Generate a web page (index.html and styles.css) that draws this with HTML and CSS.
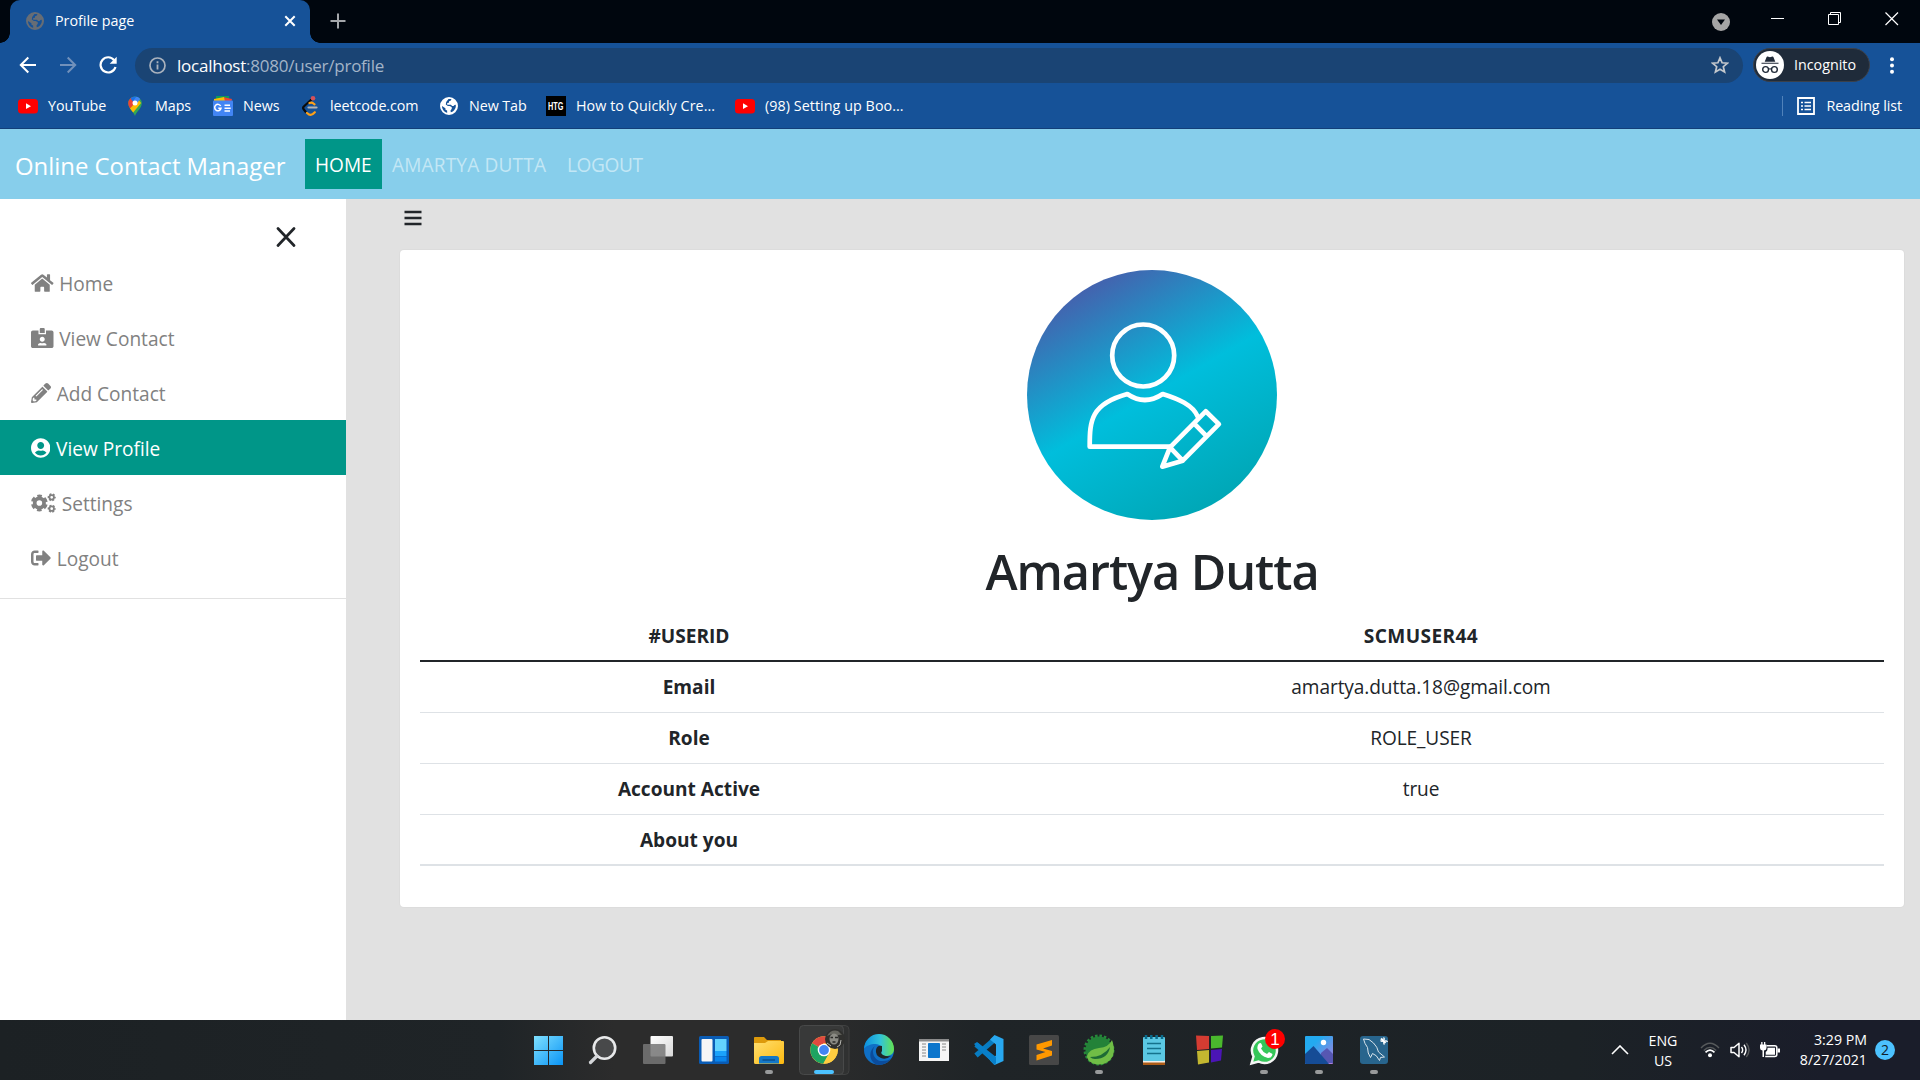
FILE: index.html
```html
<!DOCTYPE html>
<html lang="en">
<head>
<meta charset="utf-8">
<title>Profile page</title>
<link rel="stylesheet" href="styles.css">
</head>
<body>
<svg width="0" height="0" class="defs" aria-hidden="true">
  <defs>
    <symbol id="globe" viewBox="0 0 18 18"><path fill-rule="evenodd" fill="currentColor" d="M9 0a9 9 0 1 0 0 18A9 9 0 0 0 9 0zM8.500 2.100c1-.2 2-.1 2.900.2-.2 1.200-.9 1.700-2.200 1.800l-.3 1.700-1.700.2v1.700h3.700l1.200 1.300h1.500l.9-1.100 1.300-.1c.4 4.300-2.300 6.800-5 7.500l-.3-1.900 1.300-1.700-.1-1.700-2.100-1-1.700.1L5.800 7.600l.4-2.500zM2 9l3.400 2.200.1 1.500 1.600.9.100 2.200C4 15 2 12.200 2 9z"/></symbol>
    <symbol id="yt" viewBox="0 0 20 20"><rect y="3" width="20" height="14.500" rx="3.500" fill="#f00"/><path d="M8 7.300v5.800l5-2.900z" fill="#fff"/></symbol>
  </defs>
</svg>

<header class="browser">
  <div class="tabstrip">
    <div class="tab">
      <svg class="tab-icon" width="18" height="18"><use href="#globe"/></svg>
      <span class="tab-title">Profile page</span>
      <svg width="12" height="12" viewBox="0 0 12 12"><path d="M1.300 1.300l9.400 9.400M10.700 1.300L1.300 10.700" stroke="#fff" stroke-width="2"/></svg>
    </div>
    <svg class="new-tab" width="16" height="16" viewBox="0 0 16 16"><path d="M8 .5v15M.5 8h15" stroke="#a4a7ab" stroke-width="2"/></svg>
    <div class="window-controls">
      <svg width="18" height="18" viewBox="0 0 18 18"><circle cx="9" cy="9" r="9" fill="#a5a5a5"/><path d="M5 6.500h8L9 12z" fill="#00060e"/></svg>
      <svg class="raised" width="14" height="14" viewBox="0 0 14 14"><path d="M0 6.500h13" stroke="#fff"/></svg>
      <svg class="raised" width="14" height="14" viewBox="0 0 14 14"><path d="M.5 2.500h10v10H.5zM2.500 2.500v-2h10v10h-2" fill="none" stroke="#fff"/></svg>
      <svg class="raised" width="14" height="14" viewBox="0 0 14 14"><path d="M.5.5l12.500 12.500M13 .5L.5 13" stroke="#fff" stroke-width="1.200"/></svg>
    </div>
  </div>

  <div class="toolbar">
    <svg width="18" height="18" viewBox="0 0 18 18"><path d="M17 9H2M9.300 1.500L1.800 9l7.500 7.500" fill="none" stroke="#fff" stroke-width="2"/></svg>
    <svg width="18" height="18" viewBox="0 0 18 18"><path d="M1 9h15M8.700 1.500L16.200 9l-7.500 7.500" fill="none" stroke="#7191bb" stroke-width="2"/></svg>
    <svg width="18" height="18" viewBox="0 0 18 18"><path d="M15.200 4.200A7.600 7.600 0 1 0 16.500 11" fill="none" stroke="#fff" stroke-width="2.200"/><path d="M17.700.8v7h-7z" fill="#fff"/></svg>
    <div class="address">
      <svg width="17" height="17" viewBox="0 0 17 17"><circle cx="8.500" cy="8.500" r="7.500" fill="none" stroke="#aab2bd" stroke-width="1.700"/><path d="M8.500 7.500v5M8.500 4.300v1.900" stroke="#aab2bd" stroke-width="1.800"/></svg>
      <span class="url"><b>localhost</b>:8080/user/profile</span>
      <svg width="18" height="18" viewBox="0 0 18 18"><path d="M9 1.800l2.100 5 5.300.4-4.100 3.500 1.300 5.300L9 13.200 4.400 16l1.300-5.300-4.100-3.500 5.300-.4z" fill="none" stroke="#c4c8cd" stroke-width="1.700"/></svg>
    </div>
    <div class="incognito">
      <svg width="28" height="28" viewBox="0 0 28 28"><circle cx="14" cy="14" r="14" fill="#fff"/><path d="M5.500 12.800v-1.100h17v1.100zM8.700 10.800l1.900-4.700q.3-.7 1-.5l2.400.6 2.400-.6q.7-.2 1 .5l1.900 4.700z" fill="#202a38"/><circle cx="9.600" cy="18.500" r="2.900" fill="none" stroke="#202a38" stroke-width="1.400"/><circle cx="18.400" cy="18.500" r="2.900" fill="none" stroke="#202a38" stroke-width="1.400"/><path d="M12.400 18.200q1.600-.9 3.200 0" fill="none" stroke="#202a38" stroke-width="1.200"/></svg>
      <span>Incognito</span>
    </div>
    <svg class="kebab" width="4" height="17" viewBox="0 0 4 17"><g fill="#fff"><circle cx="2" cy="2.200" r="2"/><circle cx="2" cy="8.500" r="2"/><circle cx="2" cy="14.800" r="2"/></g></svg>
  </div>

  <nav class="bookmarks">
    <a><svg width="20" height="20"><use href="#yt"/></svg><span>YouTube</span></a>
    <a><svg width="20" height="20" viewBox="0 0 20 20"><clipPath id="pin"><path d="M10 20C9 16 3.200 12.300 3.200 7.300a6.800 6.800 0 0 1 13.600 0C16.800 12.300 11 16 10 20z"/></clipPath><g clip-path="url(#pin)"><path fill="#34a853" d="M0 0h20v20H0z"/><path fill="#fbbc04" d="M0 17L13 3l3 4L7 18z"/><path fill="#ea4335" d="M0 0h8l2 7-5 5.500L0 9z"/><path fill="#1a73e8" d="M5.500 2.500L9 7l7-7H7z"/><path fill="#4285f4" d="M11 8.500L16 2 12 0 8 5z"/></g><circle cx="10" cy="7" r="2.500" fill="#fff"/></svg><span>Maps</span></a>
    <a><svg width="20" height="20" viewBox="0 0 20 20"><path fill="#0f9d58" d="M3 0h13v6H3z"/><path fill="#ea4335" d="M10 1l9 2-1 4h-8z"/><path fill="#fbbc04" d="M1 3l10-2 1 5H1z"/><rect y="4.500" width="20" height="15.500" rx="1" fill="#4285f4"/><path d="M7.700 10A3.200 3.200 0 1 0 8 12.300H5.300M11.500 9.300H17M11.500 12.200h6.200M11.500 15H17" fill="none" stroke="#fff" stroke-width="1.500"/></svg><span>News</span></a>
    <a><svg width="20" height="20" viewBox="0 0 20 20"><g fill="none" stroke-linecap="round" stroke-width="2.200"><path d="M12.500 2.500L3.800 10.500q-1.400 1.400 0 3l2 2.500" stroke="#0b0b0b"/><path d="M7 17l1.500 1.200q2.300 1.300 4.500-.3l1.800-1.700M9.500 7q2.300-1 4 .5l1 .8" stroke="#ffa116"/><path d="M8.500 11.500h8" stroke="#b3b3b3"/></g><circle cx="13" cy="2.300" r="2.300" fill="#d4515a"/></svg><span>leetcode.com</span></a>
    <a><svg width="20" height="20" viewBox="-1 -1 20 20" color="#fff"><use href="#globe" width="18" height="18"/></svg><span>New Tab</span></a>
    <a><span class="htg"><b>HTG</b></span><span class="long">How to Quickly Cre...</span></a>
    <a><svg width="20" height="20"><use href="#yt"/></svg><span class="long">(98) Setting up Boo...</span></a>
    <a class="reading"><svg width="18" height="18" viewBox="0 0 18 18"><path d="M1 1h16v16H1z" fill="none" stroke="#fff" stroke-width="1.800"/><path d="M4 5.500h2M4 9h2M4 12.500h2M7.500 5.500H14M7.500 9H14M7.500 12.500H14" stroke="#fff" stroke-width="1.700"/></svg><span>Reading list</span></a>
  </nav>
</header>

<nav class="navbar">
  <a class="brand">Online Contact Manager</a>
  <a class="nav-link active">HOME</a>
  <a class="nav-link user">AMARTYA DUTTA</a>
  <a class="nav-link logout">LOGOUT</a>
</nav>

<div class="page">
  <aside class="sidebar">
    <div class="close"><svg width="20" height="20" viewBox="0 0 20 20"><path d="M2 1.500l16 17M18 1.500l-16 17" stroke="#212529" stroke-width="2.700" stroke-linecap="round"/></svg></div>
    <a class="item"><svg width="22.500" height="20" viewBox="0 0 576 512"><path d="M280.370 148.260L96 300.110V464a16 16 0 0 0 16 16l112.060-.29a16 16 0 0 0 15.920-16V368a16 16 0 0 1 16-16h64a16 16 0 0 1 16 16v95.640a16 16 0 0 0 16 16.050L464 480a16 16 0 0 0 16-16V300L295.670 148.260a12.190 12.190 0 0 0-15.300 0zM571.600 251.470L488 182.560V44.050a12 12 0 0 0-12-12h-56a12 12 0 0 0-12 12v72.610L318.470 43a48 48 0 0 0-61 0L4.340 251.470a12 12 0 0 0-1.600 16.900l25.500 31A12 12 0 0 0 45.150 301l235.220-193.740a12.190 12.190 0 0 1 15.300 0L530.900 301a12 12 0 0 0 16.900-1.600l25.500-31a12 12 0 0 0-1.700-16.930z"/></svg>Home</a>
    <a class="item"><svg width="22.500" height="20" viewBox="0 0 576 512"><path d="M528 64H384v96H192V64H48C21.500 64 0 85.500 0 112v352c0 26.500 21.500 48 48 48h480c26.500 0 48-21.500 48-48V112c0-26.500-21.500-48-48-48zM288 224c35.300 0 64 28.700 64 64s-28.700 64-64 64-64-28.700-64-64 28.700-64 64-64zm93.300 224H194.700c-10.400 0-18.800-10-15.600-19.800 8.300-25.600 32.400-44.200 60.900-44.200h8.200c12.300 5.100 25.700 8 39.800 8s27.600-2.900 39.800-8h8.200c28.400 0 52.500 18.500 60.900 44.200 3.200 9.900-5.200 19.800-15.600 19.800zM352 32c0-17.700-14.300-32-32-32h-64c-17.700 0-32 14.300-32 32v96h128V32z"/></svg>View Contact</a>
    <a class="item"><svg width="20" height="20" viewBox="0 0 512 512"><path d="M497.900 142.100l-46.100 46.100c-4.700 4.700-12.300 4.700-17 0l-111-111c-4.700-4.700-4.700-12.300 0-17l46.100-46.100c18.700-18.700 49.100-18.700 67.900 0l60.100 60.100c18.800 18.700 18.800 49.100 0 67.900zM284.200 99.800L21.600 362.400.4 483.900c-2.900 16.400 11.400 30.600 27.800 27.800l121.500-21.300 262.600-262.600c4.700-4.700 4.700-12.300 0-17l-111-111c-4.800-4.700-12.400-4.700-17.100 0zM124.100 339.900c-5.500-5.500-5.500-14.300 0-19.800l154-154c5.500-5.500 14.300-5.500 19.800 0s5.500 14.300 0 19.800l-154 154c-5.500 5.500-14.300 5.500-19.800 0zM88 424h48v36.300l-64.500 11.300-31.100-31.100L51.700 376H88v48z"/></svg>Add Contact</a>
    <a class="item active"><svg width="19.400" height="20" viewBox="0 0 496 512"><path d="M248 8C111 8 0 119 0 256s111 248 248 248 248-111 248-248S385 8 248 8zm0 96c48.600 0 88 39.400 88 88s-39.400 88-88 88-88-39.400-88-88 39.400-88 88-88zm0 344c-58.700 0-111.300-26.600-146.500-68.200 18.800-35.400 55.600-59.800 98.500-59.800 2.400 0 4.800.4 7.100 1.100 13 4.200 26.600 6.900 40.900 6.900 14.300 0 28-2.700 40.900-6.900 2.300-.7 4.700-1.100 7.100-1.100 42.900 0 79.700 24.400 98.500 59.800C359.300 421.400 306.700 448 248 448z"/></svg>View Profile</a>
    <a class="item"><svg width="25" height="20" viewBox="0 0 640 512"><g fill="none" stroke="currentColor"><circle cx="214" cy="256" r="120" stroke-width="96"/><circle cx="214" cy="256" r="176" stroke-width="78" stroke-dasharray="112 72.300" stroke-dashoffset="-36"/><circle cx="530" cy="110" r="58" stroke-width="46"/><circle cx="530" cy="110" r="84" stroke-width="40" stroke-dasharray="50 38" stroke-dashoffset="25"/><circle cx="530" cy="402" r="58" stroke-width="46"/><circle cx="530" cy="402" r="84" stroke-width="40" stroke-dasharray="50 38" stroke-dashoffset="25"/></g></svg>Settings</a>
    <a class="item"><svg width="20" height="20" viewBox="0 0 512 512"><path d="M497 273L329 441c-15 15-41 4.500-41-17v-96H152c-13.300 0-24-10.700-24-24v-96c0-13.300 10.700-24 24-24h136V88c0-21.400 25.900-32 41-17l168 168c9.300 9.400 9.300 24.600 0 34zM192 436v-40c0-6.600-5.400-12-12-12H96c-17.700 0-32-14.300-32-32V160c0-17.700 14.300-32 32-32h84c6.600 0 12-5.400 12-12V76c0-6.600-5.400-12-12-12H96c-53 0-96 43-96 96v192c0 53 43 96 96 96h84c6.600 0 12-5.400 12-12z"/></svg>Logout</a>
    <hr class="divider">
  </aside>

  <main class="content">
    <div class="burger"><svg width="18" height="16" viewBox="0 0 18 16"><path d="M.5 2h17M.5 8h17M.5 14h17" stroke="#212529" stroke-width="2.700"/></svg></div>
    <section class="card">
      <div class="avatar">
        <svg width="250" height="250" viewBox="0 0 250 250" fill="none" stroke="#fff" stroke-width="4.700" stroke-linejoin="round" stroke-linecap="round"><circle cx="116.200" cy="85.500" r="31"/><path d="M143 176.700H62.700C62.700 150 64 134 100.300 124q17.500 12 35.400 0c16 5 30 11 35 22.500"/><path d="M178.700 141.300l13.200 12.800-36.200 36.600-20.400 6 7.700-19.400zM167 153.300l12 12.400M143 177.300l12.700 13.400"/></svg>
      </div>
      <h1>Amartya Dutta</h1>
      <table>
        <colgroup><col class="labels"><col></colgroup>
        <thead><tr><th>#USERID</th><th class="uid">SCMUSER44</th></tr></thead>
        <tbody>
          <tr><th>Email</th><td>amartya.dutta.18@gmail.com</td></tr>
          <tr><th>Role</th><td>ROLE_USER</td></tr>
          <tr><th>Account Active</th><td>true</td></tr>
          <tr><th>About you</th><td></td></tr>
        </tbody>
      </table>
    </section>
  </main>
</div>

<footer class="taskbar">
  <div class="apps">
    <svg viewBox="0 0 55 60"><defs><linearGradient id="win" gradientUnits="userSpaceOnUse" x1="13" y1="16" x2="42" y2="45"><stop stop-color="#7fe0ff"/><stop offset="1" stop-color="#0a94f5"/></linearGradient></defs><path fill="url(#win)" d="M13 16h14v14H13zM28 16h14v14H28zM13 31h14v14H13zM28 31h14v14H28z"/></svg>
    <svg viewBox="0 0 55 60"><circle cx="28.500" cy="28" r="10.700" fill="#48494a" stroke="#e8e9ea" stroke-width="2.600"/><path d="M21 36l-6.500 6.500" stroke="#d4d6d9" stroke-width="3.200" stroke-linecap="round"/></svg>
    <svg viewBox="0 0 55 60"><defs><linearGradient id="tv" x2="1" y2="1"><stop stop-color="#fff"/><stop offset="1" stop-color="#d8d8d8"/></linearGradient></defs><rect x="19.500" y="16" width="22.500" height="20.500" rx="1" fill="url(#tv)"/><rect x="12" y="24" width="22.500" height="20" rx="1" fill="#777" opacity=".85"/></svg>
    <svg viewBox="0 0 55 60"><rect x="13" y="16" width="30" height="28" rx="1.500" fill="#0a5cb5"/><rect x="15.500" y="19" width="11" height="22.500" rx="1" fill="#f6f6f6"/><path fill="#63d3ff" d="M29 19h11.500v12H29z"/><path fill="#1ba3fb" d="M29 31h11.500v5H29z"/><path fill="#0a86ec" d="M29 36.500h11.500v5H29z"/></svg>
    <svg viewBox="0 0 55 60"><defs><linearGradient id="fold" x2="1" y2="1"><stop stop-color="#ffdf70"/><stop offset="1" stop-color="#fdb90f"/></linearGradient></defs><path d="M13 17.500q0-.5 1-.5h9l3 3h14v6H13z" fill="#dd9a0b"/><path d="M13 23h11l3-2h15q1 0 1 1v20.500q0 1.500-1.500 1.500h-27Q13 44 13 42.500z" fill="url(#fold)"/><path d="M18 43.500V38.500q0-2.500 2.500-2.500h15q2.500 0 2.500 2.500v5z" fill="#1478c8"/><path d="M21.500 40H34" stroke="#0b508f" stroke-width="1.500"/><rect class="run" x="24" y="50" width="8" height="4" rx="2"/></svg>
    <svg viewBox="0 0 55 60"><rect x="9" y="5.500" width="44" height="49" rx="4" fill="#303131" stroke="#404141"/><rect x="3.500" y="5.500" width="44" height="49" rx="4" fill="#383939" stroke="#484949"/><circle cx="28" cy="30" r="13.700" fill="#ffcd40"/><path d="M28 30L16.100 23.200A13.700 13.700 0 0 1 39.900 23.200z" fill="#e04a3f"/><path d="M28 30L16.100 23.200A13.700 13.700 0 0 0 27.300 43.700L33 33z" fill="#1da462"/><path d="M27 23.200h13a13.700 13.700 0 0 1-12.700 20.500l6-10z" fill="#ffcd40"/><circle cx="28" cy="30" r="6.300" fill="#fff"/><circle cx="28" cy="30" r="4.900" fill="#4285f4"/><circle cx="39" cy="19" r="10" fill="#30302e"/><path d="M31 16q4-7 11-5l4 4q-3-1-5 1l-5-2z" fill="#66665f"/><ellipse cx="38" cy="19" rx="4.500" ry="5.500" fill="#8b8b84"/><path d="M34.500 17.500h2.500M39 17.500h3M36.500 22h3" stroke="#2b2b28" stroke-width="1.300"/><path d="M31 23l4 3M45 20l-1 5-3 2" stroke="#b5b5b0" fill="none"/><rect x="18" y="50" width="20" height="4" rx="2" fill="#4cc2ff"/></svg>
    <svg viewBox="0 0 55 60"><defs><linearGradient id="ed" x2="1" y2="0"><stop stop-color="#0b8ee0"/><stop offset=".55" stop-color="#32c3d8"/><stop offset="1" stop-color="#65e34d"/></linearGradient></defs><circle cx="28" cy="30" r="15" fill="#0f6fc5"/><path d="M13 29a15 15 0 0 1 30 0c0 5-4 7-8 7-5 0-6-2-4.500-4 2-4-1-8-6-8-5 0-10 2-11.500 5z" fill="url(#ed)"/><path d="M24 26c-5 6 0 16 8 15q5 0 8-2.500A15 15 0 0 1 28 45c-9-1-12-13-4-19z" fill="#0b4c9c"/><path d="M31 26q-5-1-6 4t5 8q5 2 10-2-4 1-8-1-3-2-1-4z" fill="#202426"/></svg>
    <svg viewBox="0 0 55 60"><path fill="#f5f5f5" d="M13 19h30v22H13z"/><path fill="#8c8c8c" d="M13 19h30v2.500H13z"/><rect x="22" y="23" width="12" height="15" rx=".8" fill="#0d76cc"/><path d="M16 24h4M16 27h4M16 30h4M16 33h4M16 36h4M36 24h4M36 27h4M36 30h4" stroke="#888"/></svg>
    <svg viewBox="0 0 55 60"><path d="M15 24.500L34 41M15 35.500L34 19" stroke="#087cc1" stroke-width="5"/><path d="M33.500 15l9 4v22l-9 4-4.500-4.500 6-5v-11l-6-5z" fill="#28a8f0"/><path d="M13 24l3-2 19 15v6l-1.500 2z" fill="#087fc9"/></svg>
    <svg viewBox="0 0 55 60"><rect x="13" y="15" width="30" height="30" rx="1.500" fill="#474747"/><path d="M20.500 24.500L36 20v5.500L27 28.500l9 2.500v4.500L20.500 40.500V35l9-3-9-2.500z" fill="#ff9800"/></svg>
    <svg viewBox="0 0 55 60"><circle cx="28" cy="30" r="14" fill="none" stroke="#278a3a" stroke-width="3" stroke-dasharray="2.500 1.900"/><circle cx="28" cy="30" r="13.500" fill="#238238"/><path d="M41 20q5 14-3 21-8 6-17 2-5-3-5-7 2-7 12-8 10-1 13-8z" fill="#70bd46"/><path d="M19 37q13 0 20-10-2 12-15 12-3 0-5-2z" fill="#1d6b35"/><rect class="run" x="24" y="50" width="8" height="4" rx="2"/></svg>
    <svg viewBox="0 0 55 60"><rect x="17" y="41" width="22" height="4" fill="#ad5c17"/><path fill="#f3eee8" d="M17 40h22v2.500H17z"/><rect x="17" y="17" width="22" height="24" rx="1" fill="#5bc8e3"/><path d="M21 23.500h14M21 28.500h14M21 33.500h14" stroke="#14728c" stroke-width="1.500"/><path d="M20 15v4M25.300 15v4M30.600 15v4M36 15v4" stroke="#0a6c8d" stroke-width="2.500"/></svg>
    <svg viewBox="0 0 55 60"><path fill="#d53c32" d="M15 15.500l13 .5v13l-12 1z"/><path fill="#4ab82d" d="M30 16l12-.5-1 12-11 1z"/><path fill="#c3b730" d="M16 31l12-1v12.500l-11 2z"/><path fill="#4b15b6" d="M30 30l11-1-1 11.500-10 2z"/></svg>
    <svg viewBox="0 0 55 60"><path d="M15.500 43.500l2-7a12.500 12.500 0 1 1 5 5z" fill="#35c759" stroke="#f5f5f5" stroke-width="2.500"/><path d="M22.500 24q2-2 3 0l1 2.500-1.500 2q2 4 6 5.500l2-2 3.500 2q0 4-4.500 4-8-2-10.500-9-.5-3 1-5z" fill="#fff"/><circle cx="39" cy="19" r="10" fill="#f00"/><text x="39" y="25" class="badge-text">1</text><rect class="run" x="24" y="50" width="8" height="4" rx="2"/></svg>
    <svg viewBox="0 0 55 60"><defs><linearGradient id="ph" x2="1" y2="1"><stop offset=".3" stop-color="#23aaf0"/><stop offset="1" stop-color="#b37bdc"/></linearGradient></defs><rect x="14" y="16" width="28" height="28" rx="1" fill="url(#ph)"/><path d="M30 33l6-5 6 6v9H30z" fill="#5657b2"/><path d="M14 34l8.500-8L38 44H15q-1 0-1-1z" fill="#154c96"/><circle cx="32.500" cy="22.500" r="2.700" fill="#fff"/><rect class="run" x="24" y="50" width="8" height="4" rx="2"/></svg>
    <svg viewBox="0 0 55 60"><rect x="14" y="16" width="28" height="28" rx="3" fill="#28658d"/><path d="M17.500 19q6-1 10 4 4 4 5 9l6 5-4 .5-1 3q-3-6-7-7l-2 4q-3-4-3-10-3-4-4-8.500z" fill="none" stroke="#d8e4ec" stroke-width="1"/><path d="M35 18.500l4.500 4.500" stroke="#fff" stroke-width="2"/><path d="M37.500 17.500a2 2 0 1 1-3 3M41.500 22a2 2 0 1 0-3 2.500" fill="none" stroke="#fff" stroke-width="1.200"/><rect class="run" x="24" y="50" width="8" height="4" rx="2"/></svg>
  </div>
  <div class="tray">
    <svg width="18" height="10" viewBox="0 0 18 10"><path d="M1 9l8-8 8 8" fill="none" stroke="#fff" stroke-width="1.600"/></svg>
    <div class="lang">ENG<br>US</div>
    <svg class="wifi" width="20" height="16" viewBox="0 0 20 16" fill="none"><path d="M1 6q9-9.500 18 0M3.800 8.600q6.200-6.500 12.400 0" stroke="#56595b" stroke-width="1.400"/><path d="M5.500 10.300q4.500-4.500 9 0" stroke="#fff" stroke-width="1.700"/><circle cx="10" cy="13.300" r="2" fill="#fff"/></svg>
    <svg class="volume" width="20" height="16" viewBox="0 0 20 16" fill="none"><path d="M1 5.500h3L9 1.200v13.600L4 10.500H1z" stroke="#fff" stroke-width="1.500" stroke-linejoin="round"/><path d="M11.500 5q2.300 3 0 6M14 2.800q4 5.200 0 10.400" stroke="#fff" stroke-width="1.400"/><path d="M16.300 1q5.500 7 0 14" stroke="#55585a" stroke-width="1.400"/></svg>
    <svg class="battery" width="20" height="16" viewBox="0 0 20 16"><path d="M6.500 3.800h8.300q2 0 2 2v6.800q0 2-2 2H5.200" fill="none" stroke="#fff" stroke-width="1.500"/><path d="M7.500 5.700H15v7H5.700V10q1.800-1 1.800-3zM17.500 6.500h2.500v4h-2.500zM0 2.500h6.500V6q0 2-2.500 2.500V15H2.500V8.500Q0 8 0 6zM1.200 0h1.300v3H1.200zM4 0h1.300v3H4z" fill="#fff"/></svg>
    <div class="clock">3:29 PM<br>8/27/2021</div>
    <div class="notice">2</div>
  </div>
</footer>
</body>
</html>
```
FILE: styles.css
```css
* { box-sizing: border-box; }

body {
  margin: 0;
  width: 1920px;
  height: 1080px;
  overflow: hidden;
  display: flex;
  flex-direction: column;
  background: #e1e1e1;
  color: #212529;
  font-family: "Open Sans", "Noto Sans", sans-serif;
  font-size: 19.1px;
}

svg { display: block; flex: none; }
.defs { position: absolute; }

/* Browser window */
.browser {
  height: 129px;
  flex: none;
  background: #165298;
  border-bottom: 1px solid #133f78;
  color: #fff;
  font-size: 14.3px;
}

.tabstrip {
  height: 43px;
  display: flex;
  align-items: center;
  background: #00060e;
}

.tab {
  position: relative;
  width: 300px;
  height: 43px;
  margin-left: 10px;
  padding: 0 14px 1px 16px;
  display: flex;
  align-items: center;
  background: #165298;
  border-radius: 10px 10px 0 0;
}

.tab::before,
.tab::after {
  content: "";
  position: absolute;
  bottom: 0;
  width: 10px;
  height: 10px;
}

.tab::before { left: -10px; background: radial-gradient(circle at 0 0, transparent 9.5px, #165298 10px); }
.tab::after { right: -10px; background: radial-gradient(circle at 100% 0, transparent 9.5px, #165298 10px); }
.tab-icon { color: #676d75; }
.tab-title { flex: 1; margin-left: 11px; padding-bottom: 1px; }
.new-tab { margin: 0 0 1px 20px; }

.window-controls {
  display: flex;
  align-items: center;
  margin-left: auto;
  padding-right: 21px;
  gap: 43px;
}

.window-controls svg:first-child { margin-right: -2px; }
.raised { margin-bottom: 6px; }

.toolbar {
  height: 44px;
  padding: 0 26px 0 19px;
  display: flex;
  align-items: center;
  gap: 22px;
}

.address {
  flex: 1;
  height: 35px;
  margin-left: -4px;
  padding: 0 14px;
  display: flex;
  align-items: center;
  border-radius: 18px;
  background: #1a4474;
}

.url {
  flex: 1;
  margin-left: 11px;
  color: #a3b4c8;
  font-size: 17px;
  letter-spacing: -0.24px;
}

.url b { color: #fff; font-weight: 400; }

.incognito {
  width: 117px;
  height: 34px;
  margin: 0 -2px 0 -12px;
  padding-left: 2px;
  display: flex;
  align-items: center;
  gap: 10px;
  border: 1px solid #3b4049;
  border-radius: 17px;
  background: #1f2b3a;
}

.incognito span { padding-bottom: 1px; }

.bookmarks {
  height: 38px;
  padding: 0 18px;
  display: grid;
  grid-template-columns: 107px 88px 87px 139px 107px 189px 1fr auto;
  align-items: center;
}

.bookmarks a { display: flex; align-items: center; gap: 10px; white-space: nowrap; }
.bookmarks a > span:last-child { padding-bottom: 2px; letter-spacing: -0.08px; }
.bookmarks a > .long:last-child { letter-spacing: 0.06px; }
.bookmarks .reading { padding-left: 14px; height: 20px; gap: 11px; border-left: 1px solid #5082ba; }

.htg {
  width: 20px;
  height: 20px;
  display: flex;
  align-items: center;
  justify-content: center;
  background: #000;
  font: 700 11px/1 "Liberation Sans", sans-serif;
}

.htg b { transform: scaleX(0.66); }

/* Application bar */
.navbar {
  height: 70px;
  flex: none;
  padding-left: 15px;
  display: flex;
  align-items: center;
  background: #87ceeb;
}

.brand { width: 290px; padding-top: 2px; color: #fff; font-size: 23.9px; }

.nav-link {
  height: 50px;
  padding: 0 10px;
  color: #c3e7f5;
  line-height: 52px;
}

.nav-link.active { width: 77px; background: #009688; color: #fff; }
.user { width: 175px; letter-spacing: 0.15px; }
.logout { letter-spacing: -0.4px; }

.page { flex: 1; display: flex; min-height: 0; }

/* Side menu */
.sidebar { width: 346px; background: #fff; }

.close {
  height: 56px;
  padding: 28px 50px 0 0;
  display: flex;
  justify-content: flex-end;
}

.item {
  height: 55px;
  padding-left: 31px;
  display: flex;
  align-items: center;
  gap: 5.7px;
  color: #818181;
  line-height: 28px;
  padding-top: 2px;
}

.item svg { fill: currentColor; margin-bottom: 1px; }
.item.active { background: #009688; color: #fff; }
.divider { margin: 13px 0 0; border: 0; border-top: 1px solid #e1e1e1; }

/* Profile */
.content { flex: 1; padding: 0 16px 0 54px; }
.burger { height: 51px; padding: 11px 0 0 4px; }

.card {
  height: 657px;
  padding: 20px;
  background: #fff;
  border-radius: 4px;
  box-shadow: 0 0 0 1px #dcdcdc;
}

.avatar {
  width: 250px;
  height: 250px;
  margin: 0 auto;
  border-radius: 50%;
  background: linear-gradient(150deg, #4462ae 13%, #00bedc 50%, #00a7b6 87%);
}

h1 {
  margin: 21px 0 11px;
  text-align: center;
  font-size: 48.6px;
  font-weight: 600;
  line-height: 60px;
  letter-spacing: -1.05px;
}

table {
  width: 1464px;
  table-layout: fixed;
  border-collapse: collapse;
  text-align: center;
}

.labels { width: 538px; }

th,
td {
  height: 51px;
  padding: 1px 0 0;
  border-bottom: 1px solid #dee2e6;
}

thead th { height: 49px; padding: 0; border-bottom: 2px solid #212529; }
tbody tr:last-child > * { border-bottom-width: 2px; }
.uid { letter-spacing: 0.4px; }
td { letter-spacing: -0.1px; }

/* Taskbar */
.taskbar {
  height: 60px;
  flex: none;
  display: flex;
  padding: 0 25px 0 521px;
  background: linear-gradient(90deg, #1c2124 0, #1f2427 26%, #2c2c2c 32%, #2c2c2c 42%, #1f2427 51%, #1c2226 82%, #1a1d2a 95%, #1a1d2a);
  color: #fff;
  font-size: 14.2px;
  line-height: 20px;
}

.apps { display: flex; }
.apps svg { width: 55px; height: 60px; overflow: visible; }
.run { fill: #989a9b; }
.badge-text { fill: #fff; font: 17px "Liberation Sans", sans-serif; text-anchor: middle; }

.tray { margin-left: auto; display: flex; align-items: center; }
.lang { width: 32px; margin: 1px 21px 0 18px; text-align: center; }
.wifi { margin-right: 10px; }
.volume { margin-right: 10px; }
.clock { width: 87px; text-align: right; }

.notice {
  width: 20px;
  height: 20px;
  margin-left: 8px;
  border-radius: 50%;
  background: #4cc2ff;
  color: #10202b;
  font-size: 14px;
  text-align: center;
}
```
